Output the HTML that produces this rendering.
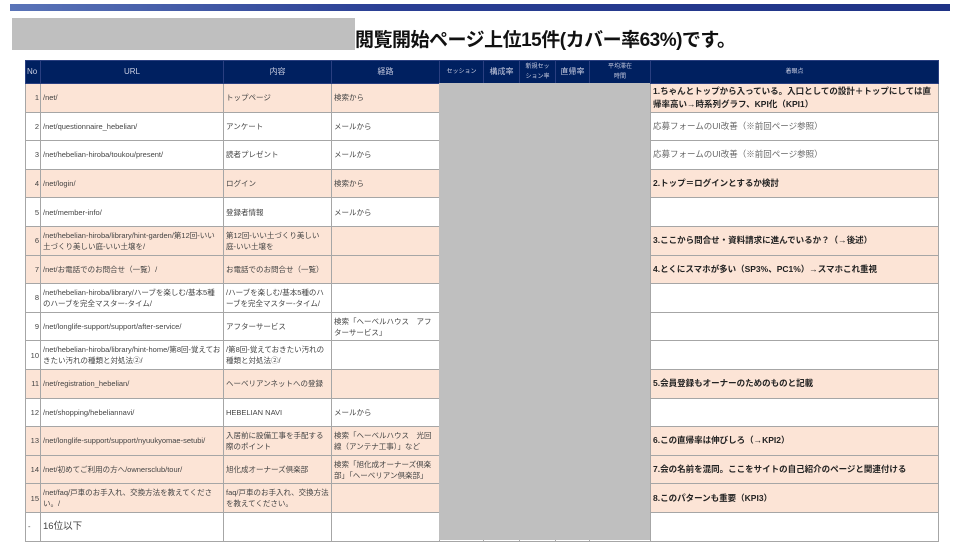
<!DOCTYPE html>
<html><head><meta charset="utf-8"><style>
body{margin:0;width:960px;height:540px;overflow:hidden;background:#fff;font-family:"Liberation Sans","Noto Sans CJK JP",sans-serif;position:relative}
.bar{position:absolute;left:10px;top:4px;width:940px;height:7px;background:linear-gradient(90deg,#5a74b8,#2a3f94 40%,#1f3386)}
.gb{position:absolute;left:12px;top:18px;width:343px;height:32px;background:#bfbfbf}
.t{position:absolute;left:355px;top:25px;font-size:19px;font-weight:bold;color:#111;white-space:nowrap;letter-spacing:-0.5px}
table{position:absolute;left:25px;top:60px;border-collapse:collapse;table-layout:fixed;width:913px}
td{border:1px solid #a6a6a6;font-size:7.5px;color:#444;padding:0 2px;line-height:11px;box-sizing:border-box;vertical-align:middle}
td div{max-height:23px;overflow:hidden}
tr{height:28.6px}
tr.h{height:23px}
tr.h td{background:#002060;color:#c8cce0;text-align:center;font-size:8px;border-color:#2a3f80;line-height:10px}
tr.h td.s{font-size:6px}
.p td{background:#fce4d6}
td.n{text-align:right;padding-right:1px}
td.k{font-size:8.5px;font-weight:bold;color:#222;line-height:13px}
td.k div{max-height:27px}
td.g{color:#666;font-size:8.5px}
.gray{position:absolute;left:439px;top:83px;width:211px;height:457px;background:#bfbfbf}
</style></head><body>
<div class="bar"></div><div class="gb"></div>
<div class="t">閲覧開始ページ上位15件(カバー率63%)です。</div>
<table>
<colgroup><col style="width:15px"><col style="width:183px"><col style="width:108px"><col style="width:108px"><col style="width:44px"><col style="width:36px"><col style="width:36px"><col style="width:34px"><col style="width:61px"><col style="width:288px"></colgroup>
<tr class="h"><td style="text-align:left;padding:0 1px">No</td><td>URL</td><td>内容</td><td>経路</td><td class="s">セッション</td><td>構成率</td><td class="s">新規セッ<br>ション率</td><td>直帰率</td><td class="s">平均滞在<br>時間</td><td class="s">着眼点</td></tr>
<tr class="p"><td class="n">1</td><td>/net/</td><td>トップページ</td><td>検索から</td><td></td><td></td><td></td><td></td><td></td><td class="k"><div>1.ちゃんとトップから入っている。入口としての設計＋トップにしては直帰率高い→時系列グラフ、KPI化（KPI1）</div></td></tr>
<tr><td class="n">2</td><td>/net/questionnaire_hebelian/</td><td>アンケート</td><td>メールから</td><td></td><td></td><td></td><td></td><td></td><td class="g">応募フォームのUI改善（※前回ページ参照）</td></tr>
<tr><td class="n">3</td><td>/net/hebelian-hiroba/toukou/present/</td><td>読者プレゼント</td><td>メールから</td><td></td><td></td><td></td><td></td><td></td><td class="g">応募フォームのUI改善（※前回ページ参照）</td></tr>
<tr class="p"><td class="n">4</td><td>/net/login/</td><td>ログイン</td><td>検索から</td><td></td><td></td><td></td><td></td><td></td><td class="k">2.トップ＝ログインとするか検討</td></tr>
<tr><td class="n">5</td><td>/net/member-info/</td><td>登録者情報</td><td>メールから</td><td></td><td></td><td></td><td></td><td></td><td></td></tr>
<tr class="p"><td class="n">6</td><td><div>/net/hebelian-hiroba/library/hint-garden/第12回-いい土づくり美しい庭-いい土壌を/</div></td><td><div>第12回-いい土づくり美しい庭-いい土壌を</div></td><td></td><td></td><td></td><td></td><td></td><td></td><td class="k">3.ここから問合せ・資料請求に進んでいるか？（→後述）</td></tr>
<tr class="p"><td class="n">7</td><td>/net/お電話でのお問合せ（一覧）/</td><td>お電話でのお問合せ（一覧）</td><td></td><td></td><td></td><td></td><td></td><td></td><td class="k">4.とくにスマホが多い（SP3%、PC1%）→スマホこれ重視</td></tr>
<tr><td class="n">8</td><td><div>/net/hebelian-hiroba/library/ハーブを楽しむ/基本5種のハーブを完全マスター-タイム/</div></td><td><div>/ハーブを楽しむ/基本5種のハーブを完全マスター-タイム/</div></td><td></td><td></td><td></td><td></td><td></td><td></td><td></td></tr>
<tr><td class="n">9</td><td>/net/longlife-support/support/after-service/</td><td>アフターサービス</td><td><div>検索「ヘーベルハウス　アフターサービス」</div></td><td></td><td></td><td></td><td></td><td></td><td></td></tr>
<tr><td class="n">10</td><td><div>/net/hebelian-hiroba/library/hint-home/第8回-覚えておきたい汚れの種類と対処法②/</div></td><td><div>/第8回-覚えておきたい汚れの種類と対処法②/</div></td><td></td><td></td><td></td><td></td><td></td><td></td><td></td></tr>
<tr class="p"><td class="n">11</td><td>/net/registration_hebelian/</td><td style="white-space:nowrap">ヘーベリアンネットへの登録</td><td></td><td></td><td></td><td></td><td></td><td></td><td class="k">5.会員登録もオーナーのためのものと記載</td></tr>
<tr><td class="n">12</td><td>/net/shopping/hebeliannavi/</td><td>HEBELIAN NAVI</td><td>メールから</td><td></td><td></td><td></td><td></td><td></td><td></td></tr>
<tr class="p"><td class="n">13</td><td>/net/longlife-support/support/nyuukyomae-setubi/</td><td><div>入居前に設備工事を手配する際のポイント</div></td><td><div>検索「ヘーベルハウス　光回線（アンテナ工事）」など</div></td><td></td><td></td><td></td><td></td><td></td><td class="k">6.この直帰率は伸びしろ（→KPI2）</td></tr>
<tr class="p"><td class="n">14</td><td>/net/初めてご利用の方へ/ownersclub/tour/</td><td>旭化成オーナーズ倶楽部</td><td><div>検索「旭化成オーナーズ倶楽部」「ヘーベリアン倶楽部」</div></td><td></td><td></td><td></td><td></td><td></td><td class="k">7.会の名前を混同。ここをサイトの自己紹介のページと関連付ける</td></tr>
<tr class="p"><td class="n">15</td><td><div>/net/faq/戸車のお手入れ、交換方法を教えてください。/</div></td><td><div>faq/戸車のお手入れ、交換方法を教えてください。</div></td><td></td><td></td><td></td><td></td><td></td><td></td><td class="k">8.このパターンも重要（KPI3）</td></tr>
<tr><td style="text-align:left">-</td><td style="font-size:9.5px">16位以下</td><td></td><td></td><td></td><td></td><td></td><td></td><td></td><td></td></tr>
</table>
<div class="gray"></div>
</body></html>
